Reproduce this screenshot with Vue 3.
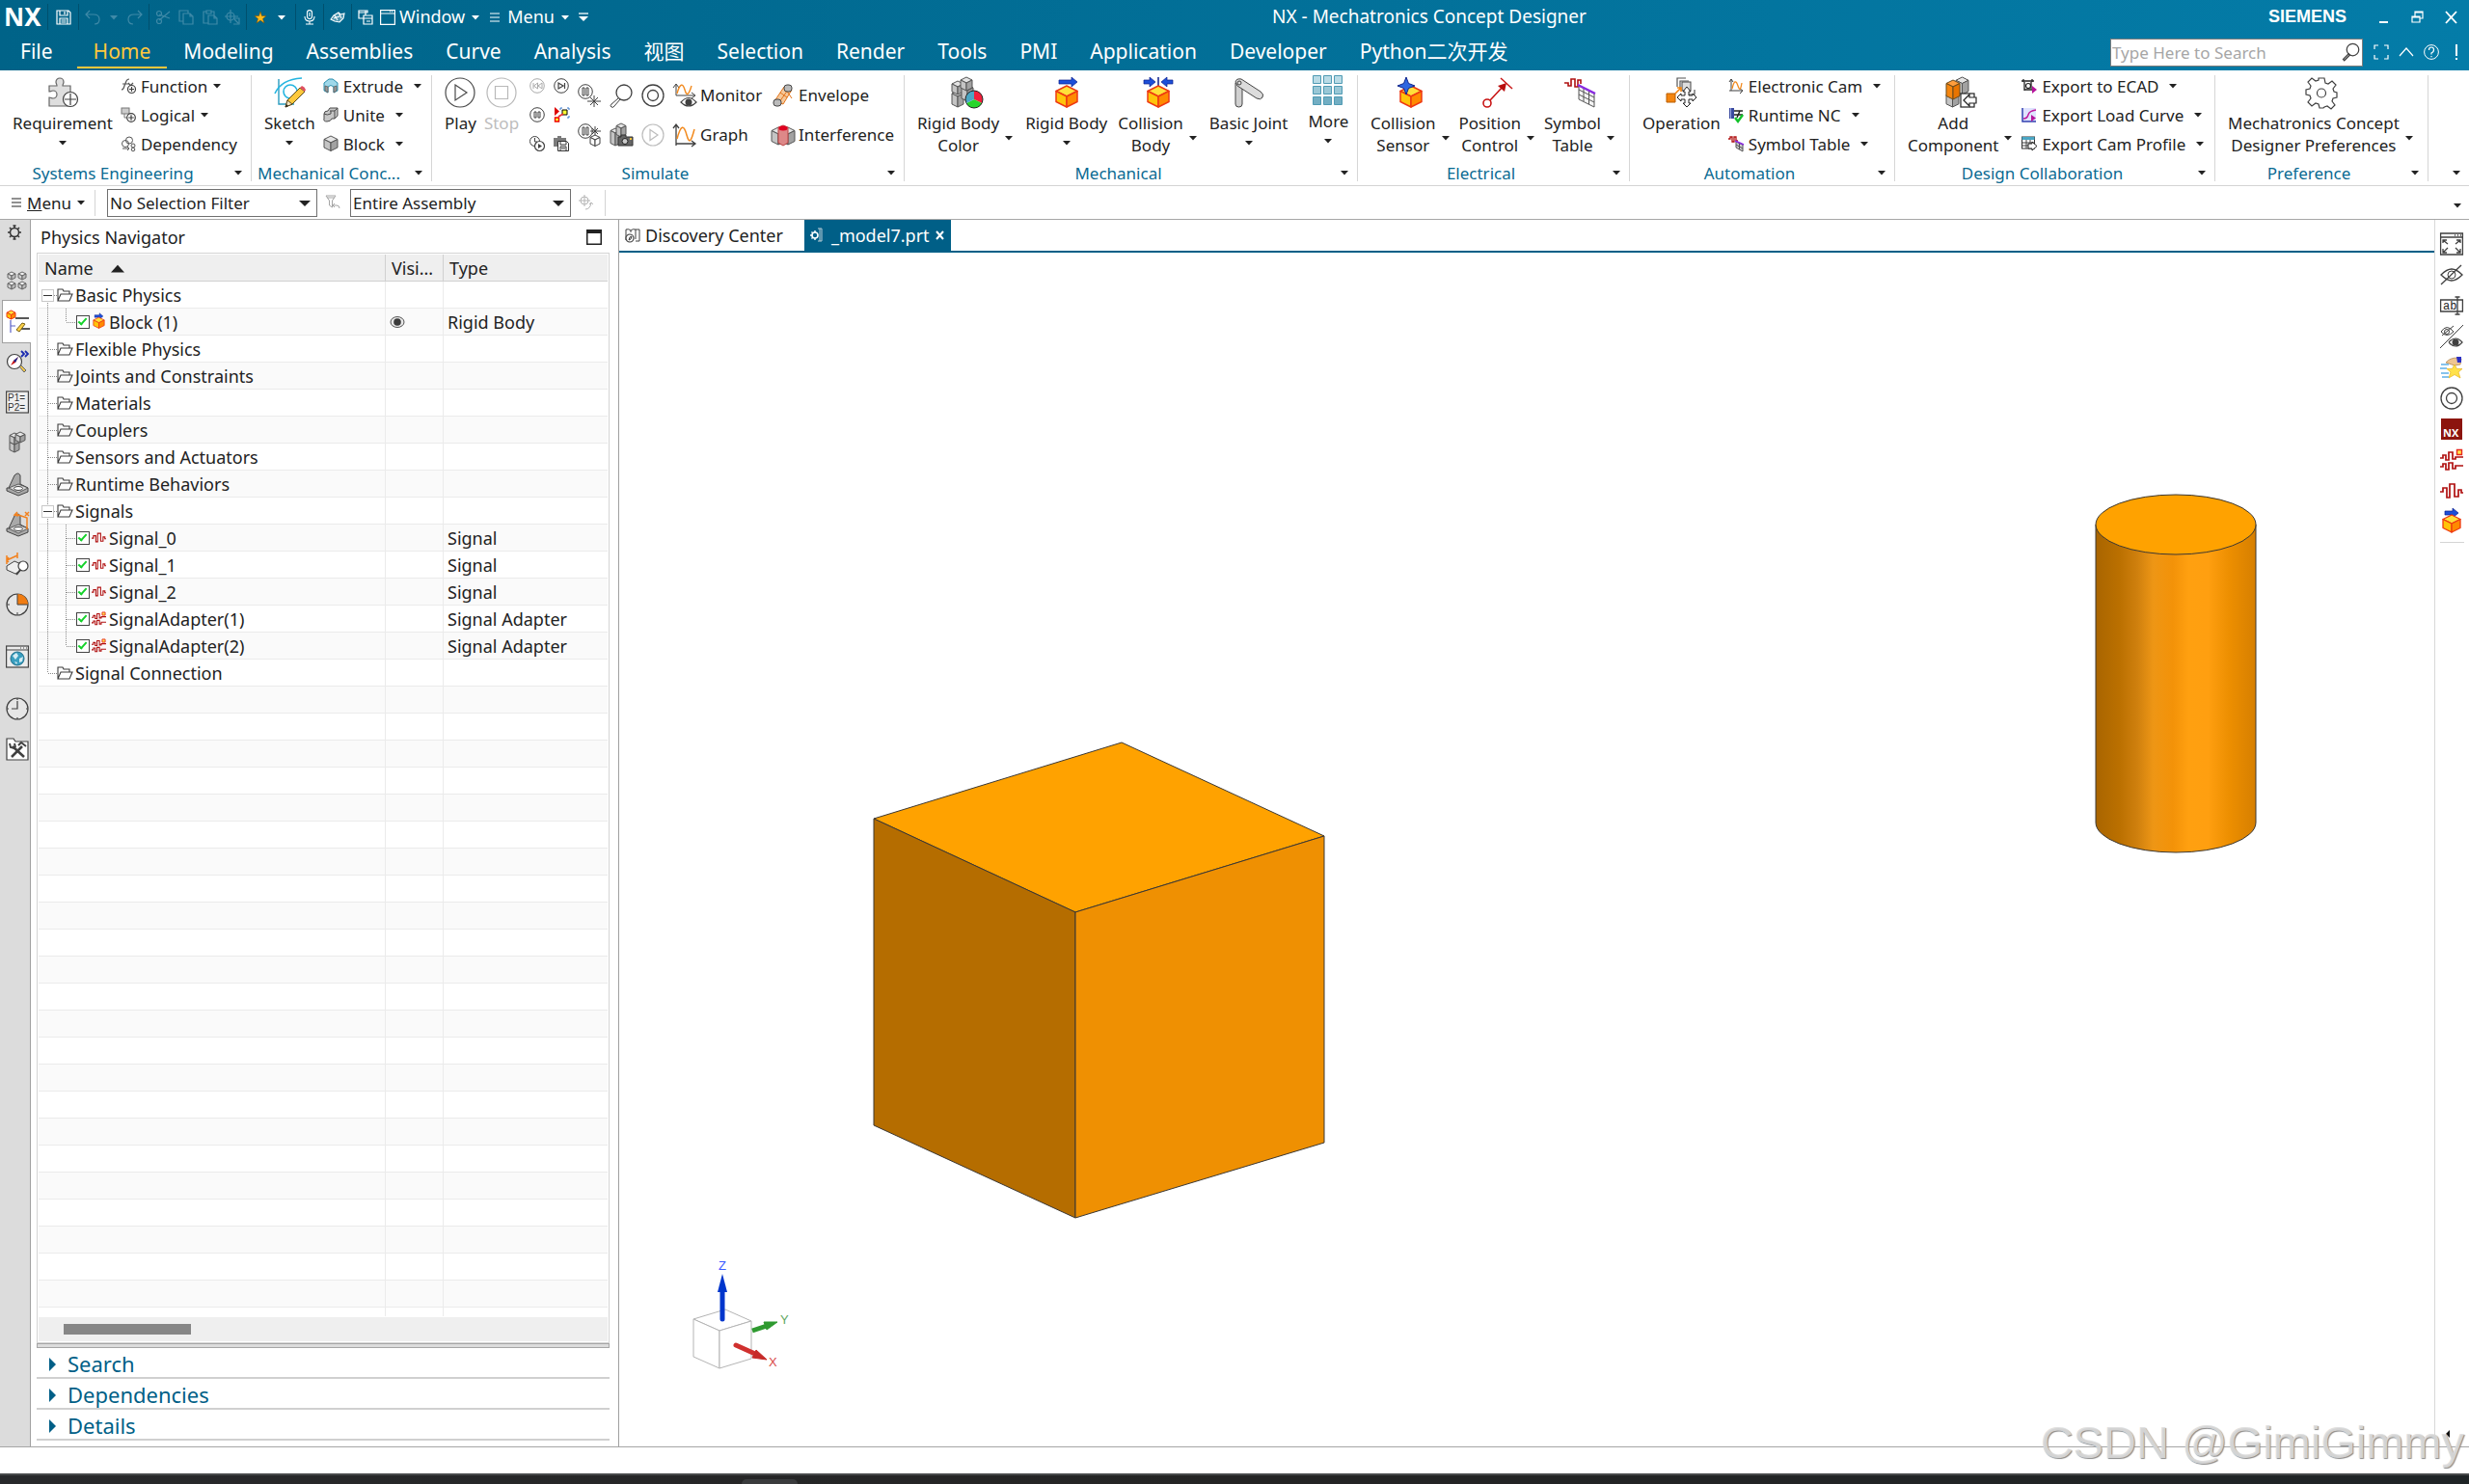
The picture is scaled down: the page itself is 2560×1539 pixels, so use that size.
<script setup>
import { h, ref } from 'vue'

const K = '#404040'
const grey = ['#e4e4e4', '#c4c4c4', '#a2a2a2', '#555']
const hot = ['#ffe03a', '#ffc40a', '#ff8a00', '#ee3a12']
const orange = ['#ff9d3c', '#f5860f', '#e87400', '#6b4a1a']

/* Isometric box: x, y is the top-left of its bounds, c = [top, left, right, edge] */
const box = (x, y, w, ht, c, sw = 1) => {
  const d = w / 4
  const m = x + w / 2
  return `<g stroke="${c[3]}" stroke-width="${sw}" stroke-linejoin="round"><path fill="${c[0]}" d="M${m} ${y}L${x + w} ${y + d}L${m} ${y + 2 * d}L${x} ${y + d}Z"/><path fill="${c[1]}" d="M${x} ${y + d}L${m} ${y + 2 * d}V${y + ht}L${x} ${y + ht - d}Z"/><path fill="${c[2]}" d="M${x + w} ${y + d}L${m} ${y + 2 * d}V${y + ht}L${x + w} ${y + ht - d}Z"/></g>`
}
const line = (d, c = K, w = 1, f = 'none') => `<path d="${d}" fill="${f}" stroke="${c}" stroke-width="${w}"/>`
const circ = (x, y, r, c = K, w = 1, f = 'none') => `<circle cx="${x}" cy="${y}" r="${r}" fill="${f}" stroke="${c}" stroke-width="${w}"/>`
const plus = (x, y, r) => circ(x, y, r, K, 1.2, '#fff') + line(`M${x - r + 1.5} ${y}H${x + r - 1.5}M${x} ${y - r + 1.5}V${y + r - 1.5}`, K, 1.2)
const eyeShape = (x, y, c = K) => line(`M${x - 11} ${y}Q${x - 5} ${y - 6} ${x} ${y - 6}T${x + 11} ${y}Q${x + 5} ${y + 6} ${x} ${y + 6}T${x - 11} ${y}Z`, c, 1.3)
const arrowR = (x, y, w) => `<path d="M${x} ${y - 2}h${w - 6}v-3l6 5l-6 5v-3h-${w - 6}z" fill="#1d4fd8" stroke="#0b1c8a" stroke-width=".7"/>`
const bracket = '<path d="M3 17L9 4q4-4 6 0v9l8 4v4l-10 4L1 20v-3z" fill="#a9a9a9" stroke="#444"/><path d="M3 17l10-4l10 4l-10 5z" fill="#d6d6d6" stroke="#444" stroke-width=".8"/><ellipse cx="13" cy="17.500" rx="4.500" ry="2" fill="#fff" stroke="#444"/>'

const icons = {
  caret: [8, '<path d="M0 2h8L4 6.500z" fill="currentColor"/>'],
  burger: [10, line('M0 1h10M0 5h10M0 9h10', 'currentColor')],
  overflow: [10, line('M0 1h10', 'currentColor', 1.3) + '<path d="M0 4h10L5 9z" fill="currentColor"/>'],
  save: [16, line('M1 1h12l2 2v12H1zM4 1v5h8V1M9 2v3M4 15V9h8v6M5.500 11h5M5.500 13h5', '#fff', 1.2)],
  undo: [16, line('M5 1L1 5l4 4M1 5h8q6 0 6 5t-5 5', '#3f8aa8', 1.2)],
  redo: [16, line('M11 1l4 4l-4 4M15 5H7q-6 0-6 5t5 5', '#3f8aa8', 1.2)],
  cut: [16, line('M4 5l11 4M4 11l11-9', '#3f8aa8', 1.2) + circ(4, 4, 2.5, '#3f8aa8', 1.2) + circ(4, 12, 2.5, '#3f8aa8', 1.2)],
  copy: [16, line('M10 4V1H1v11h4M5 4h7l3 3v8H5zM12 4v3h3', '#3f8aa8', 1.2)],
  paste: [16, line('M4 2H1v12h5M9 2h3v4M4 1h5v3H4zM6 6h6l3 3v6H6zM12 6v3h3', '#3f8aa8', 1.2)],
  move: [16, line('M6 0v14M0 7h14M9 9h6v6H9M10 10l4 4', '#3f8aa8', 1.2) + circ(6, 7, 4, '#3f8aa8', 1.2)],
  star: [16, '<path d="M8 2l1.500 4.500h4.500l-3.500 3l1.500 4.500L8 11l-4 3l1.500-4.500L2 6.500h4.500z" fill="#ffb91a" stroke="#7d4a00" stroke-width=".5"/>'],
  mic: [16, '<rect x="5.500" y=".6" width="5" height="9" rx="2.500" fill="none" stroke="#fff" stroke-width="1.100"/>' + line('M3 7q0 5 5 5t5-5M8 12v3M4 15h8M8 3v4', '#fff', 1.1)],
  hand: [16, line('M1 10l3-4l5-3l2 2l4-1l-1 5l-4 4l-5-1zM4 9l6-2M5 6l3 5M9 3l3 6', '#fff', 1.1, 'rgba(255,255,255,.3)')],
  windows: [16, line('M8 6V1H1v8h5M1 3h9V1H8M6 6h9v9H6zM6 9h9M9 12h4', '#fff', 1.2)],
  window: [16, line('M.6.6h14.800v14.800H.6zM1 4h14M10 2h1M12 2h1', '#fff', 1.2)],
  puzzle: [32, line('M2 9h8c0-2-1-2-1-4a4 4 0 0 1 8 0c0 2-1 2-1 4h8v21H2V21c2 0 2 1 4 1a4 4 0 0 0 0-8c-2 0-2 1-4 1z', '#666', 1.2, '#dedede') + plus(24, 23, 7.5)],
  func: [16, line('M1 12q2 0 3-4l2-5q1-2 3-2M2 6h6M8 5l5 6M13 5l-5 5', '#555', 1.2) + plus(11.5, 11.5, 4)],
  logical: [16, '<rect x="1" y="1" width="8" height="6" fill="#ccc" stroke="#777"/>' + line('M4 7v4h4', '#777') + plus(11, 11, 4.3)],
  depend: [16, circ(5, 8, 3.5, '#555') + circ(9, 4.5, 3.5, '#555') + line('M2 13h7M7 11l2 2l-2 2', '#555') + circ(13, 10, 2, '#555') + circ(13, 14, 1.8, '#555')],
  sketch: [32, line('M5 2v26h16', '#2a9cbf', 1.4) + line('M1 17C5 8 14 2 29 1', '#25b5e0', 1.6) + circ(17, 15, 7, '#25b5e0', 1.6) + '<path d="M12 31l2-7L27 11l5 4L19 28z" fill="#ffc83c" stroke="#5e4a1c"/><path d="M27 11l2-2q3 1 4 4l-1 2z" fill="#e05060"/><path d="M12 31l2-7l5 4z" fill="#f3e3c0" stroke="#5e4a1c"/><path d="M12 31l1-3l2 2z" fill="#222"/>'],
  extrude: [16, '<path d="M1 5l5-4h4l5 4v8l-4 2V9q-3-3-6 0v6l-4-2z" fill="#9fd8ea" stroke="#2b8fae"/><path d="M2 8v5l3 2V9zM14 8v5l-3 2V9z" fill="#9a9a9a" stroke="#555" stroke-width=".7"/>'],
  unite: [16, '<path d="M1 7q0-3 4-3l2-3h8v8l-3 3H9q-1 3-5 3t-3-3z" fill="#c6c6c6" stroke="#4b4b4b"/><path d="M7 4h5l3-3M12 4v8M1 7q3 2 7 0V4" fill="none" stroke="#4b4b4b"/>'],
  block: [16, box(1, 0, 14, 15.5, grey)],
  play: [32, circ(16, 16, 15, '#4a4a4a', 1.2) + line('M11 8l12 8l-12 8z', '#4a4a4a', 1.2)],
  stop: [32, circ(16, 16, 15, '#b9b9b9', 1.2) + line('M9.500 9.500h13v13h-13z', '#b9b9b9', 1.2)],
  playOff: [24, circ(12, 12, 11, '#bdbdbd', 1.2) + line('M9 6.500l8 5.500l-8 5.500z', '#bdbdbd', 1.2)],
  rewind: [16, circ(8, 8, 7.3, '#aaa') + line('M4 5v6M8.500 5v6l-4-3zM13 5v6l-4-3z', '#aaa')],
  forward: [16, circ(8, 8, 7.3) + line('M11.500 5v6M5 5v6l5-3z', K, 1.2)],
  pause: [16, circ(8, 8, 7.3) + line('M5 5h2v6H5zM9 5h2v6H9z')],
  flow: [16, '<path d="M1 0l5 4.500L1 9z" fill="#d00"/><path d="M9 3h5v5H9z" fill="#ff3" stroke="#000"/><path d="M1.500 11h4v4h-4z" fill="#ff3" stroke="#e00" stroke-width="1.400"/><path d="M5 10l5-3" stroke="#e33" stroke-width="2"/><path d="M7 3V1h2M14 1h2v2M16 9v2h-2" fill="none" stroke="#37c"/>'],
  timer: [16, circ(5.5, 5.5, 5) + line('M5.500 2v4H8') + circ(10.5, 10.5, 5, K, 1.2, '#fff') + '<path d="M9 8l4 2.500L9 13z" fill="#404040"/>'],
  snapshot: [16, '<path d="M0 2h4V0h4v2h5v9H0z" fill="#7b7b7b"/><path d="M4.500 5.500h9l2 2v8h-11z" fill="#fff" stroke="#333"/><path d="M7 6v3h6V6M7 15v-4h6v4M8 13h4" fill="none" stroke="#333"/>'],
  pauseHit: [24, circ(8, 8, 7.3) + line('M5 4h2v8H5zM9 4h2v8H9z') + line('M17 12v12M10 18h14M13 14l8 8M21 14l-8 8')],
  pauseBox: [24, circ(8, 8, 7.3) + line('M5 4h2v8H5zM9 4h2v8H9z') + line('M18 3v10M13 8h11M15 5l6 6M21 5l-6 6') + box(13, 12, 10, 11.5, ['#fff', '#fff', '#fff', K])],
  lens: [24, circ(15, 9, 8, K, 1.3) + line('M9 15l-7 6q-2 2 0 3t3-1l6-7')],
  target: [24, circ(12, 12, 11, K, 1.3) + circ(12, 12, 5.5, K, 1.3)],
  monitor: [24, line('M3 12V1M0 4l3-4l3 4M3 12h19M19 9l4 3l-4 3') + line('M4 10c3-11 6-11 8-4s4 6 7-4', '#f28a1e', 1.4) + line('M8 19q8-9 16 0q-8 8-16 0z', K, 1.2, '#fff') + '<circle cx="16" cy="19" r="3.500" fill="#404040"/>'],
  graph: [24, line('M3 23V1M0 5l3-4l3 4M3 21h20M19 18l4 3l-4 3', K, 1.3) + line('M4 16c4-15 7-15 10-4s5 5 8-6', '#f28a1e', 1.5)],
  camera: [24, box(1, 5, 10, 18, grey) + box(7, 0, 10, 14, grey) + '<path d="M9 14h3v-2h5v2h7v9H9z" fill="#666" stroke="#333"/><circle cx="16" cy="18.500" r="3" fill="#ccc" stroke="#222"/><path d="M21 15h2v2h-2z" fill="#ffc53a"/>'],
  envelope: [24, '<path d="M13 3l8 3l-9 15l-9-3z" fill="#f6c89a" stroke="#e3741a"/><path d="M17 6l-9 13M13 3l8 12M9 9l7 5" stroke="#e3741a" fill="none"/><rect x="13" y="1" width="8" height="7" rx="3" fill="#bbb" stroke="#444"/><rect x="2" y="16" width="8" height="7" rx="3" fill="#bbb" stroke="#444"/>'],
  interfere: [24, box(0, 4, 14, 18, grey) + box(10, 4, 14, 18, grey) + '<path d="M7 4l5-2l5 2v16l-5 3l-5-3z" fill="#d88" stroke="#b44"/><ellipse cx="12" cy="5" rx="4.500" ry="2.500" fill="#e00020"/>'],
  color: [32, box(1, 14, 12, 17, grey) + box(1, 4, 12, 14, grey) + box(11, 8, 12, 17, grey) + box(10, 0, 12, 14, grey) + '<path d="M24 23V14a9 9 0 0 1 8 13z" fill="#f1203c"/><path d="M24 23l8 4a9 9 0 0 1-16 0z" fill="#27d52b"/><path d="M24 23l-8 4a9 9 0 0 1 8-13z" fill="#4aa6c4"/><circle cx="24" cy="23" r="9" fill="none" stroke="#222"/>'],
  rigid: [32, arrowR(8, 5, 19) + box(5, 9, 22, 22, hot, 1.5)],
  collide: [32, arrowR(1, 5, 12) + '<path d="M31 3h-6V0l-6 5l6 5V7h6z" fill="#1d4fd8" stroke="#0b1c8a" stroke-width=".7"/><path d="M16 0v10" stroke="#0b1c8a" stroke-width="1.500"/>' + box(5, 9, 22, 22, hot, 1.5)],
  joint: [32, '<path d="M2 6v22q0 3 3.500 3T9 28V9z" fill="#d0d0d0" stroke="#444"/><path d="M2 5q1-4 6-3l20 13q4 3 2 6t-6 1L4 9z" fill="#dcdcdc" stroke="#444"/>' + circ(6, 6, 2)],
  more: [32, '<g stroke="#4f9ab3"><g fill="#b9dbe6"><path d="M.5.5h8v8h-8zM11.500.5h8v8h-8zM22.500.5h8v8h-8z"/></g><g fill="#99c7d6"><path d="M.5 11.500h8v8h-8zM11.500 11.500h8v8h-8zM22.500 11.500h8v8h-8z"/></g><g fill="#72aec3"><path d="M.5 22.500h8v8h-8zM11.500 22.500h8v8h-8zM22.500 22.500h8v8h-8z"/></g></g>'],
  sensor: [32, box(5, 9, 22, 22, hot, 1.5) + '<path d="M11 0l2.500 6.500L20 9l-6.500 2.500L11 18l-2.500-6.500L2 9l6.500-2.500z" fill="#2e66e0" stroke="#10258c"/>'],
  position: [32, circ(5, 27, 4, '#c81414', 1.6) + line('M8 24L22 9', '#c81414', 1.6) + '<path d="M25 6l-2 9l-7-6z" fill="#b80e0e"/>' + line('M19 1l12 11', '#c81414', 1.4)],
  symbols: [32, line('M0 6h4v3h3V2h4v8h3V3h3v4', '#b01010', 1.6) + '<path d="M15 9l16 8v14l-16-8z" fill="#f4f4f4" stroke="#555"/>' + line('M15 13l16 8M15 18l16 8M20 11v14M25.500 14v14', '#555') + line('M14 8l18 9', '#8a2be2', 2.4)],
  operation: [32, line('M12 10V1h9M15 13V4h9M30 13v5h-6', '#555', 1.2) + '<rect x="17" y="5" width="9" height="9" fill="#ddd" stroke="#444"/><path d="M1 17h9v9H1z" fill="#f5860f" stroke="#b85c00"/>' + line('M10 17l5-5M12 11h4v4', '#f5860f', 1.6) + '<path d="M22 11l4 5h-2v4h4v-2l4 4l-4 4v-2h-4v4h2l-4 4l-4-4h2v-4h-4v2l-4-4l4-4v2h4v-4h-2z" fill="#fff" stroke="#222" transform="translate(0 -1)"/>'],
  cam: [16, line('M3 13V1M1 4l2-3l2 3M1 13h13M12 11l3 2l-3 3') + line('M4 11c2-9 4-9 6-3s3 3 4-3', '#f28a1e', 1.3)],
  runtime: [16, '<path d="M1 1h5v11H1z" fill="#3a4aa0"/><path d="M2 1h1v11H2z" fill="#9aa6e0"/>' + line('M6 4h9M6 8h9M12 4l-3 7', '#222', 1.5) + line('M7 11l3 4l5-7', '#12c22a', 2.5)],
  symtab: [16, line('M0 3h2V1h2v5h2V1h2v4h2', '#b01010', 1.3) + '<path d="M8 6l7 3v7l-7-4z" fill="#ccc" stroke="#555"/>' + line('M8 9l7 4M11.500 8v6', '#555') + line('M7 5l9 4', '#8a2be2', 1.5)],
  add: [32, box(11, 0, 13, 18, grey) + box(1, 15, 13, 16, grey) + box(1, 3, 14, 20, orange) + '<rect x="16" y="17" width="14" height="14" fill="#fff" stroke="#222" stroke-width="1.200"/><path d="M19 24l6-6v3h7v6h-7v3z" fill="#fff" stroke="#222" stroke-width="1.200"/>'],
  ecad: [16, line('M0 3h13M2 1v3M11 1v3M3 4v9M3 12h8M10 4v7', '#222', 1.3) + circ(7, 8, 2.5, '#222', 1.2) + '<path d="M11 8l5 4l-5 4z" fill="#b6149c"/>'],
  load: [16, '<rect x="1" y="1" width="14" height="14" fill="#dfe3ff"/>' + line('M1 1v14h14', '#3340b0', 1.5) + line('M2 12q4 0 5-4t8-5', '#c0189c', 1.4) + '<path d="M10 8l5 3.500l-5 3.500z" fill="#b6149c"/>'],
  profile: [16, '<rect x=".5" y="1" width="13" height="12" fill="#fff" stroke="#333"/><rect x=".5" y="1" width="13" height="3" fill="#4aa6c4"/>' + line('M1 7h12M1 10h12M5 4v9M9 4v9') + '<path d="M7 8h4V6l5 4.500L11 15v-2H7z" fill="#fff" stroke="#222"/>'],
  gear: [32, line('M13 1h6l1 5l3 1l4-3l4 4l-3 4l1 3l3 1v0l0 1v4l-4 1l-1 3l3 4l-4 4l-4-3l-3 1l-1 1h-4l-1-4l-3-1l-4 3l-4-4l3-4l-1-3l-4-1v-5l4-1l1-3l-3-4l4-4l4 3l3-1z', K, 1.2) + circ(16, 16.5, 4.5, K, 1.2)],
  filterBack: [16, line('M1 1h10L7.500 6v7l-3-2V6zM2 3h8M10 9l-2 2l2 2M8 11h4q3 0 3 3', '#a5a5a5')],
  snap: [16, line('M6 0v12M0 6h12M7 15q5 0 6-7M11 10l2-2l2 2', '#b5b5b5') + circ(6, 6, 4, '#b5b5b5')],
  cog: [16, line('M6.500 1h3M8 1v2M8 13v2M6.500 15h3M1 8h2M13 8h2M3 3l2 2M13 3l-2 2M3 13l2-2M13 13l-2-2', '#333', 1.5) + circ(8, 8, 4.5, '#333', 1.5)],
  cubes: [24, [[2, 3], [13, 3], [2, 13], [13, 13]].map(([x, y]) => box(x, y, 8, 8, ['#eee', '#d0d0d0', '#bbb', '#666'], 1)).join('')],
  tree: [24, box(0, 0, 9, 9, hot) + line('M9 8h14M15 19h9', '#222', 1.3) + line('M4 10v13M4 16h5', '#5a62c8', 1.2) + '<path d="M10 20l6-7l3 1l-6 8z" fill="#ffd24a" stroke="#7a6210"/>'],
  find: [24, circ(9, 12, 7.5, K, 1.2, '#fff') + '<path d="M5 16l3-5l5-4l-3 6z" fill="#c81414"/><path d="M8 11l5-4l-3 6z" fill="#1a2a90"/><path d="M14 17l2-1l5 5l-2 2z" fill="#f2c84a" stroke="#666"/>' + line('M16 1l3 3l-3 3M20 1l3 3l-3 3', '#1a2ab0', 1.8)],
  params: [24, '<rect x=".6" y="1" width="22.800" height="22" fill="#efefef" stroke="#444" stroke-width="1.200"/><text x="2" y="11" font-size="10" font-family="Liberation Sans, sans-serif" fill="#333">P1=</text><text x="2" y="21" font-size="10" font-family="Liberation Sans, sans-serif" fill="#333">P2=</text>'],
  parts: [24, box(4, 9, 10, 13, grey) + box(4, 2, 10, 12, grey) + box(10, 1, 10, 11, grey)],
  bracket: [24, bracket],
  bracketDim: [24, bracket + line('M10 2l12 4v12M12 0l-3 3l4 1M20 0l4 4M24 0l-4 4', '#f2811e', 1.5)],
  measure: [24, '<path d="M1 14l8-5l9 4v4l-8 5l-9-4z" fill="#eee" stroke="#444"/>' + line('M1 8l11-5M1 3v9M12 0v6M3 10l-2-2l2-3', '#f2811e', 1.5) + circ(18, 14, 5, K, 1.2, '#fff') + line('M15 18l-4 5', K, 2)],
  pie: [24, circ(12, 12, 11, K, 1.2, '#e6e6e6') + '<path d="M12 12V1a11 11 0 0 1 11 11z" fill="#f07c12"/>' + line('M1 12h3M12 23v-3M12 1v11h11')],
  web: [24, '<rect x=".6" y="1" width="22.800" height="22" fill="#ececec" stroke="#444" stroke-width="1.200"/>' + line('M1 5h22M15 3h1M18 3h1M21 3h1') + circ(12, 14, 7, '#1d6d8a', 1, '#3a9fc0') + '<path d="M7 11l4-3l2 3l-3 4zM14 14l4-2l-1 5l-3 1zM9 17l3 1l-1 2z" fill="#d6ecf3"/>'],
  clock: [24, circ(12, 12, 11, K, 1.2, '#e6e6e6') + line('M12 4v8H6M12 1v2M12 21v2M21 12h2M1 12h2', K, 1.2)],
  toolbox: [24, line('M1 4V1h7l2 3h13v19H1z', K, 1.2, '#fff') + line('M7 9l12 11M17 9L6 20', K, 2.6) + line('M4 6l1 4l4 1M9 6l1 4M13 8l3-3l5 4', K, 2)],
  fit: [24, line('M.6 1h22.800v22H.6zM1 5h22M15 3h1M18 3h1M21 3h1M3 11V8h4M3 8l5 4M17 8h4v3M21 8l-5 4M3 17v4h4M3 21l5-5M17 21h4v-4M21 21l-5-5', K, 1.3)],
  eyeOff: [24, eyeShape(12, 12) + circ(12, 12, 4) + line('M1 22L22 2', K, 1.3)],
  rename: [24, line('M.6 6h22.800v12H.6zM18 3v18M15.500 3h5M15.500 21h5', K, 1.3) + '<text x="3" y="16" font-size="12" font-family="Liberation Mono, monospace" fill="#222">ab</text>'],
  swap: [24, line('M1 7q6-9 13 0q-7 7-13 0M2 11L14 1M0 24L24 0') + circ(7, 7, 2.5) + line('M9 18q7-8 14 0q-7 8-14 0', K, 1.2, '#fff') + '<circle cx="16" cy="18" r="3.500" fill="#404040"/>'],
  favorite: [24, '<path d="M6 7q4-5 12-5l4 1l-1 6l-6 1z" fill="#eec592" stroke="#a77a42" stroke-width=".7"/><path d="M17 1h5v6h-4z" fill="#2b2fc4"/><path d="M15 9l2.500 4.500H23l-4 3.500l2 6l-6-3.500L9 23l2-6l-4-3.500h5.500z" fill="#ffe14a" stroke="#e8b520" stroke-width=".7"/>' + line('M1 9h8M0 13h7M1 18h8M2 22h7', '#5fb0e6', 1.5)],
  nx: [24, '<rect x="1" y="1" width="22" height="22" fill="#8c140e"/><text x="3" y="20" font-size="11" font-weight="700" font-family="Open Sans, sans-serif" fill="#fff">NX</text>'],
  adapter: [24, line('M0 10h3v-3h3v5h3V4h4v7h3V9h8M0 19h3v-3h3v6h3v-7h4v6h3v-3h8', '#b01010', 1.7) + '<path d="M17.500 1.500h5v5h-5z" fill="#ffe84a" stroke="#e8281e" stroke-width="1.400"/>'],
  signal: [24, line('M0 13h3v-4h4v10h3v-14h5v13h4v-7h3v3h2', '#b01010', 1.7)],
  rigidSm: [24, arrowR(5, 3, 14) + box(3, 5, 18, 18, hot, 1.3)],
  folder: [16, line('M1 14V2h5l1 2h6v3M1 14L4 7h12l-3 7z', '#3c3c3c', 1.1)],
  eye: [16, '<ellipse cx="8" cy="8" rx="7" ry="5.500" fill="#e8e8e8" stroke="#555"/><circle cx="8" cy="8" r="3.800" fill="#3a3a3a"/>'],
  maximize: [16, '<path d="M0 0h16v16H0zM1.500 4v10.500h13V4z" fill="#222" fill-rule="evenodd"/>'],
  book: [16, line('M1 13V2q3-1 5 1q2-2 5-1l4 0v12h-4M6 3v2M11 2v10') + circ(5, 11, 4, K, 1.2, '#fff') + line('M4 13l1-3l2-1l-1 3z')],
  part: [16, line('M8 1h4v13H8M10 1v13', '#b9cdd6') + circ(5, 8, 3, '#fff', 1.6) + line('M5 3v2M5 11v2M0 8h2M1.500 4.500l1.500 1.500M1.500 11.500L3 10', '#fff', 1.4)],
  close: [10, line('M1 1l7 8M8 1L1 9', 'currentColor', 2)],
  expand: [16, line('M1 5V1h4M11 1h4v4M15 11v4h-4M5 15H1v-4', '#fff', 1.2)],
  up: [16, line('M1 12l7-8l7 8', '#fff', 1.2)],
  help: [16, circ(8, 8, 7.4, '#fff') + line('M5.500 6q0-3 2.500-3t2.500 2.500T8 9v1.500M8 12v1.200', '#fff', 1.2)],
  bang: [16, line('M8 0v12M8 14v2', '#fff', 2)],
  min: [16, line('M3 13h9', '#fff', 2)],
  restore: [16, line('M2 7h8v6H2zM2 8h8M5 7V2h8v7h-3M5 3h8', '#fff', 1.2)],
  exit: [16, line('M2 2l11 12M13 2L2 14', '#fff', 1.8)],
  searchSm: [16, circ(10, 6, 5, K) + line('M7 9l-5 5l1 1l5-5', K)]
}

const Icon = (props) => {
  const [vb, body] = icons[props.n]
  const s = props.s || vb
  return h('svg', { width: s, height: s, viewBox: `0 0 ${vb} ${vb}`, 'aria-hidden': 'true', innerHTML: body })
}
Icon.props = ['n', 's']

const tabs = ['File', 'Home', 'Modeling', 'Assemblies', 'Curve', 'Analysis', '视图', 'Selection', 'Render', 'Tools', 'PMI', 'Application', 'Developer', 'Python二次开发']
const activeTab = ref('Home')

const quick = [
  { i: 'save', wide: 1 }, { sep: 1 }, { i: 'undo' }, { i: 'caret', dim: 1 }, { i: 'redo' }, { sep: 1 },
  { i: 'cut' }, { i: 'copy', wide: 1 }, { i: 'paste', wide: 1 }, { i: 'move' }, { sep: 1 },
  { i: 'star' }, { i: 'caret' }, { sep: 1 }, { i: 'mic' }, { sep: 1 }, { i: 'hand' }, { sep: 1 }, { i: 'windows' }
]

const groups = [
  { name: 'Systems Engineering', big: [{ i: 'puzzle', t: ['Requirement'], c: 1 }],
    small: [{ i: 'func', t: 'Function', c: 1 }, { i: 'logical', t: 'Logical', c: 1 }, { i: 'depend', t: 'Dependency' }] },
  { name: 'Mechanical Conc...', big: [{ i: 'sketch', t: ['Sketch'], c: 1 }],
    small: [{ i: 'extrude', t: 'Extrude', c: 1 }, { i: 'unite', t: 'Unite', c: 1 }, { i: 'block', t: 'Block', c: 1 }], loose: 1 },
  { name: 'Simulate', big: [{ i: 'play', t: ['Play'] }, { i: 'stop', t: ['Stop'], off: 1 }], sim: 1 },
  { name: 'Mechanical', roomy: 1, big: [
    { i: 'color', t: ['Rigid Body', 'Color'], c: 1 }, { i: 'rigid', t: ['Rigid Body'], c: 1 },
    { i: 'collide', t: ['Collision', 'Body'], c: 1 }, { i: 'joint', t: ['Basic Joint'], c: 1 }, { i: 'more', t: ['More'], c: 1, gallery: 1 }] },
  { name: 'Electrical', big: [
    { i: 'sensor', t: ['Collision', 'Sensor'], c: 1 }, { i: 'position', t: ['Position', 'Control'], c: 1 }, { i: 'symbols', t: ['Symbol', 'Table'], c: 1 }] },
  { name: 'Automation', big: [{ i: 'operation', t: ['Operation'] }],
    small: [{ i: 'cam', t: 'Electronic Cam', c: 1 }, { i: 'runtime', t: 'Runtime NC', c: 1 }, { i: 'symtab', t: 'Symbol Table', c: 1 }], loose: 1 },
  { name: 'Design Collaboration', big: [{ i: 'add', t: ['Add', 'Component'], c: 1 }],
    small: [{ i: 'ecad', t: 'Export to ECAD', c: 1 }, { i: 'load', t: 'Export Load Curve', c: 1 }, { i: 'profile', t: 'Export Cam Profile', c: 1 }], loose: 1 },
  { name: 'Preference', big: [{ i: 'gear', t: ['Mechatronics Concept', 'Designer Preferences'], c: 1 }] }
]
const simSmall = ['rewind', 'forward', 'pause', 'flow', 'timer', 'snapshot']
const simMid = ['pauseHit', 'lens', 'target', 'pauseBox', 'camera', 'playOff']
const simText = [['monitor', 'Monitor'], ['envelope', 'Envelope'], ['graph', 'Graph'], ['interfere', 'Interference']]

const rows = [
  { t: 'Basic Physics', open: 1, first: 1 },
  { t: 'Block (1)', kid: 1, last: 1, i: 'rigidSm', eye: 1, type: 'Rigid Body' },
  { t: 'Flexible Physics' }, { t: 'Joints and Constraints' }, { t: 'Materials' }, { t: 'Couplers' },
  { t: 'Sensors and Actuators' }, { t: 'Runtime Behaviors' }, { t: 'Signals', open: 1 },
  { t: 'Signal_0', kid: 1, i: 'signal', type: 'Signal' }, { t: 'Signal_1', kid: 1, i: 'signal', type: 'Signal' },
  { t: 'Signal_2', kid: 1, i: 'signal', type: 'Signal' }, { t: 'SignalAdapter(1)', kid: 1, i: 'adapter', type: 'Signal Adapter' },
  { t: 'SignalAdapter(2)', kid: 1, last: 1, i: 'adapter', type: 'Signal Adapter' }, { t: 'Signal Connection', end: 1 }
]
const guide = (r) => {
  if (r.kid) return `M9.500 0V28M28.500 0V${r.last ? 14 : 28}M29 14.500H38`
  return `M9.500 ${r.first ? 14 : 0}V${r.end ? 14 : 28}M10 14.500H19`
}
const checked = ref(rows.map((r) => !!r.kid))

const side = ['cubes', 'tree', 'find', 'params', 'parts', 'bracket', 'bracketDim', 'measure', 'pie', 'web', 'clock', 'toolbox']
const strip = ['fit', 'eyeOff', 'rename', 'swap', 'favorite', 'target', 'nx', 'adapter', 'signal', 'rigidSm']
</script>

<template>
  <div class="app">
    <header class="head">
      <div class="title-row">
        <strong class="logo">NX</strong>
        <i class="vline"></i>
        <template v-for="(q, k) in quick" :key="k">
          <i v-if="q.sep" class="vline"></i>
          <button v-else type="button" class="qbtn" :class="{ dim: q.dim, wide: q.wide }"><Icon :n="q.i" /></button>
        </template>
        <button type="button" class="qtext"><Icon n="window" />Window<Icon n="caret" class="qc" /></button>
        <button type="button" class="qtext"><Icon n="burger" class="qb" />Menu<Icon n="caret" class="qc" /></button>
        <button type="button" class="qbtn over"><Icon n="overflow" /></button>
        <h1>NX - Mechatronics Concept Designer</h1>
        <strong class="siemens">SIEMENS</strong>
        <button type="button" class="win"><Icon n="min" /></button>
        <button type="button" class="win"><Icon n="restore" /></button>
        <button type="button" class="win"><Icon n="exit" /></button>
      </div>
      <nav class="tab-row">
        <button v-for="t in tabs" :key="t" type="button" class="tab" :class="{ on: t === activeTab }" @click="activeTab = t">{{ t }}</button>
        <label class="search"><input type="text" placeholder="Type Here to Search" aria-label="Type Here to Search" /><Icon n="searchSm" s="20" /></label>
        <button v-for="n in ['expand', 'up', 'help', 'bang']" :key="n" type="button" class="aid"><Icon :n="n" /></button>
      </nav>
    </header>

    <section class="ribbon">
      <div v-for="g in groups" :key="g.name" class="group">
        <div class="tools" :class="{ roomy: g.roomy }">
          <button v-for="b in g.big" :key="b.t[0] + b.i" type="button" class="big" :class="{ off: b.off, gallery: b.gallery }">
            <Icon :n="b.i" />
            <span class="cap">
              <span class="lines"><span v-for="l in b.t" :key="l">{{ l }}</span></span>
              <Icon v-if="b.c" n="caret" :class="b.t.length > 1 ? 'beside' : 'under'" />
            </span>
          </button>
          <div v-if="g.small" class="smalls" :class="{ loose: g.loose }">
            <button v-for="s in g.small" :key="s.t" type="button" class="small"><Icon :n="s.i" /><span>{{ s.t }}</span><Icon v-if="s.c" n="caret" class="sc" /></button>
          </div>
          <template v-if="g.sim">
            <div class="sim-small"><button v-for="n in simSmall" :key="n" type="button"><Icon :n="n" /></button></div>
            <div class="sim-mid"><button v-for="n in simMid" :key="n" type="button"><Icon :n="n" /></button></div>
            <div class="sim-text"><button v-for="[n, t] in simText" :key="n" type="button"><Icon :n="n" />{{ t }}</button></div>
          </template>
        </div>
        <div class="group-name"><span>{{ g.name }}</span><button type="button"><Icon n="caret" /></button></div>
      </div>
      <div class="group rest"><div class="group-name"><button type="button"><Icon n="caret" /></button></div></div>
    </section>

    <section class="selbar">
      <button type="button" class="menu"><Icon n="burger" /><span><u>M</u>enu</span><Icon n="caret" /></button>
      <i class="bar"></i>
      <span class="pick first"><select aria-label="Selection filter"><option>No Selection Filter</option></select></span>
      <Icon n="filterBack" />
      <span class="pick second"><select aria-label="Selection scope"><option>Entire Assembly</option></select></span>
      <Icon n="snap" />
      <i class="bar"></i>
      <button type="button" class="more-sel"><Icon n="caret" /></button>
    </section>

    <main class="main">
      <aside class="side">
        <button type="button" class="cog"><Icon n="cog" /></button>
        <button v-for="n in side" :key="n" type="button" :class="['res', n, { on: n === 'tree' }]"><Icon :n="n" /></button>
      </aside>

      <section class="nav">
        <div class="nav-title"><h2>Physics Navigator</h2><button type="button"><Icon n="maximize" /></button></div>
        <div class="grid">
          <div class="grid-body">
            <table>
              <colgroup><col class="c1" /><col class="c2" /><col /></colgroup>
              <thead>
                <tr><th>Name <Icon n="caret" s="14" class="sort" /></th><th>Visi...</th><th>Type</th></tr>
              </thead>
              <tbody>
                <tr v-for="(r, k) in rows" :key="r.t">
                  <td>
                    <div class="node">
                      <svg class="guide" :width="r.kid ? 38 : 19" height="28"><path :d="guide(r)" /></svg>
                      <button v-if="r.open" type="button" class="minus" :aria-label="'Collapse ' + r.t"></button>
                      <label v-if="r.kid" class="kid"><input v-model="checked[k]" type="checkbox" /><Icon :n="r.i" s="15" />{{ r.t }}</label>
                      <span v-else class="dir"><Icon n="folder" />{{ r.t }}</span>
                    </div>
                  </td>
                  <td><Icon v-if="r.eye" n="eye" /></td>
                  <td>{{ r.type }}</td>
                </tr>
                <tr v-for="n in 24" :key="n"><td></td><td></td><td></td></tr>
              </tbody>
            </table>
          </div>
          <div class="hscroll"><div class="thumb"></div></div>
        </div>
        <div class="split"></div>
        <button v-for="s in ['Search', 'Dependencies', 'Details']" :key="s" type="button" class="fold">{{ s }}</button>
      </section>

      <section class="stage">
        <div class="files">
          <button type="button" class="file"><Icon n="book" />Discovery Center</button>
          <button type="button" class="file cur"><Icon n="part" />_model7.prt<Icon n="close" /></button>
        </div>
        <svg class="scene" viewBox="642 262 1882 1238">
          <defs>
            <linearGradient id="barrel">
              <stop offset="0" stop-color="#a96500" /><stop offset=".15" stop-color="#bb7000" /><stop offset=".26" stop-color="#cf800e" />
              <stop offset=".36" stop-color="#ee9615" /><stop offset=".48" stop-color="#f39208" /><stop offset=".58" stop-color="#ffa010" />
              <stop offset=".7" stop-color="#ff9f10" /><stop offset=".84" stop-color="#ec8e00" /><stop offset="1" stop-color="#d67f00" />
            </linearGradient>
          </defs>
          <g stroke="#3c3833" stroke-linejoin="round">
            <path fill="#ffa200" d="M1163 770L1373 867L1115 946L906 849Z" />
            <path fill="#b56d00" d="M906 849L1115 946V1263L906 1167Z" />
            <path fill="#ef9002" d="M1373 867L1115 946V1263L1373 1185Z" />
            <path fill="url(#barrel)" d="M2173 544V853A83 31 0 0 0 2339 853V544Z" />
            <ellipse fill="#ffa200" cx="2256" cy="544" rx="83" ry="31" />
          </g>
          <g fill="#fff" stroke="#b4b4b4">
            <path d="M719 1368L752 1358L779 1370L746 1380Z" />
            <path d="M719 1368L746 1380V1419L719 1407Z" />
            <path d="M779 1370L746 1380V1419L779 1409Z" />
          </g>
          <path d="M749 1368V1338" stroke="#0036cc" stroke-width="5" stroke-linecap="round" />
          <path d="M749 1321L754 1340H744Z" fill="#0036cc" />
          <path d="M780 1380L795 1375" stroke="#2f9a30" stroke-width="5" />
          <path d="M806 1371L792 1371L795 1379Z" fill="#2f9a30" stroke="#2f9a30" />
          <path d="M763 1395L783 1404" stroke="#d0302e" stroke-width="5" stroke-linecap="round" />
          <path d="M795 1410L784 1400L780 1408Z" fill="#c62a28" stroke="#c62a28" />
          <g class="axis"><text x="745" y="1317" fill="#3b5bff">Z</text><text x="809" y="1373" fill="#5fa863">Y</text><text x="797" y="1417" fill="#d94a4a">X</text></g>
        </svg>
      </section>

      <aside class="strip">
        <button v-for="n in strip" :key="n" type="button"><Icon :n="n" /></button>
        <i></i>
        <span class="tick"></span>
      </aside>
    </main>

    <footer class="status"></footer>
    <div class="dock"><span></span></div>
    <div class="mark">CSDN @GimiGimmy</div>
  </div>
</template>

<style>
body {
  margin: 0;
}
</style>

<style scoped>
.app {
  position: relative;
  display: flex;
  flex-direction: column;
  height: 100vh;
  overflow: hidden;
  background: #fff;
  color: #222;
  font: 17px/23px 'Noto Sans', 'Noto Sans CJK SC', sans-serif;
}
svg {
  display: block;
  flex: none;
  overflow: visible;
}
button {
  display: flex;
  align-items: center;
  padding: 0;
  border: 0;
  background: none;
  color: inherit;
  font: inherit;
  white-space: nowrap;
}
h1, h2 {
  margin: 0;
  font: inherit;
}

.head {
  background: linear-gradient(90deg, #006388, #047ca8);
  color: #fff;
}
.title-row {
  display: flex;
  align-items: center;
  height: 35px;
}
.logo {
  width: 45px;
  padding-left: 4px;
  font: 700 26px/35px 'Noto Sans', sans-serif;
}
.vline {
  width: 1px;
  height: 27px;
  background: #00506e;
}
.qbtn {
  justify-content: center;
  width: 22px;
  height: 30px;
}
.vline + .qbtn {
  margin-left: 3px;
}
.qbtn:has(+ .vline) {
  margin-right: 3px;
}
.qbtn.dim {
  color: #3f8aa8;
}
.qbtn.wide {
  width: 25px;
}
.qtext {
  gap: 4px;
  margin-left: 4px;
  font-size: 18px;
}
.qc {
  margin-left: 3px;
}
.qb {
  margin: 0 4px 0 7px;
}
.over {
  margin-left: 4px;
}
h1 {
  flex: 1;
  padding-right: 4px;
  text-align: center;
  font-size: 19px;
}
.siemens {
  margin-right: 22px;
  font: 700 18px/35px 'Liberation Sans', sans-serif;
}
.win {
  width: 35px;
  padding-left: 9px;
  box-sizing: border-box;
}
.tab-row {
  display: flex;
  align-items: center;
  height: 38px;
}
.tab {
  height: 36px;
  box-sizing: border-box;
  margin-bottom: 2px;
  padding: 2px 17px 0;
  border-bottom: 2px solid transparent;
  font-size: 21px;
}
.tab:first-child {
  padding: 2px 25px 0 21px;
}
.tab.on {
  border-color: #ffc83c;
  color: #ffc83c;
}
.search {
  display: flex;
  align-items: center;
  box-sizing: border-box;
  width: 262px;
  height: 29px;
  margin-left: auto;
  margin-right: 6px;
  padding-right: 2px;
  border: 1px solid #7c7c7c;
  background: #fff;
}
.search input {
  flex: 1;
  min-width: 0;
  padding: 0 1px;
  border: 0;
  outline: 0;
  font: inherit;
}
.search input::placeholder {
  color: #a6a6a6;
}
.aid {
  justify-content: center;
  width: 26px;
}

.ribbon {
  display: grid;
  grid-template-columns: 261px 187px 490px 470px 282px 275px 332px 221px 1fr;
  height: 119px;
  border-bottom: 1px solid #d4d4d4;
}
.group {
  display: flex;
  flex-direction: column;
  margin: 5px 0 4px;
  border-right: 1px solid #d6d6d6;
}
.group.rest {
  justify-content: flex-end;
  border: 0;
}
.group.rest .group-name {
  justify-content: flex-end;
}
.tools {
  display: flex;
  flex: 1;
  padding-left: 9px;
}
.roomy {
  gap: 3px;
}
.big {
  flex-direction: column;
  align-self: flex-start;
  gap: 4px;
  padding: 2px 4px 0;
}
.big.off {
  color: #bdbdbd;
}
.big.gallery {
  padding: 0 4px 0 14px;
}
.cap {
  display: flex;
  align-items: center;
}
.cap:has(.under) {
  flex-direction: column;
}
.lines {
  display: flex;
  flex-direction: column;
  align-items: center;
}
.beside {
  margin: 8px 2px 0 6px;
}
.under {
  margin-top: 5px;
}
.smalls {
  display: flex;
  flex-direction: column;
  margin: -4px 0 0 4px;
}
.small {
  gap: 5px;
  height: 30px;
}
.small svg.sc {
  margin-left: 1px;
}
.loose .small svg.sc {
  margin-left: 6px;
}
.sim-small {
  display: grid;
  grid-template: repeat(3, 30px) / 25px 25px;
  margin: -4px 0 0 7px;
}
.sim-mid {
  display: grid;
  grid-template: repeat(2, 41px) / repeat(3, 33px);
  height: 82px;
}
.sim-text {
  display: grid;
  grid-template: repeat(2, 41px) / 102px auto;
  height: 82px;
}
.sim-text button {
  gap: 4px;
}
.group-name {
  display: flex;
  height: 18px;
  color: #0a6a92;
}
.group-name span {
  flex: 1;
  text-align: center;
  line-height: 19px;
}
.group-name button {
  justify-content: center;
  width: 26px;
  height: 18px;
  color: #222;
}

.selbar {
  display: flex;
  align-items: center;
  height: 34px;
  border-bottom: 1px solid #a6a6a6;
}
.menu {
  gap: 6px;
  padding: 0 10px 0 12px;
}
.bar {
  width: 1px;
  height: 27px;
  background: #d4d4d4;
}
.pick {
  position: relative;
  display: block;
  height: 29px;
}
.pick::after {
  content: '';
  position: absolute;
  right: 7px;
  top: 12px;
  border: solid transparent;
  border-width: 6px 6px 0;
  border-top-color: #222;
  pointer-events: none;
}
.pick select {
  width: 100%;
  height: 29px;
  padding: 0 2px;
  border: 1px solid #707070;
  border-radius: 0;
  appearance: none;
  background: #fff;
  color: inherit;
  font: inherit;
}
.first {
  width: 218px;
  margin: 0 8px 0 12px;
}
.second {
  width: 229px;
  margin: 0 8px 0 10px;
}
.second ~ .bar {
  margin-left: 11px;
}
.more-sel {
  margin: 6px 8px 0 auto;
}

.main {
  display: flex;
  flex: 1;
  min-height: 0;
  border-bottom: 1px solid #a6a6a6;
}
.side {
  display: flex;
  flex-direction: column;
  box-sizing: border-box;
  width: 32px;
  border-right: 1px solid #a0a0a0;
  background: #dcdcdc;
}
.side .cog {
  height: 26px;
  margin-bottom: 16px;
  padding-left: 7px;
}
.res {
  height: 42px;
  padding-left: 6px;
}
.res.on {
  height: 45px;
  margin: -1px -1px -2px 2px;
  padding-left: 4px;
  border: 1px solid #a0a0a0;
  border-right: 0;
  box-sizing: border-box;
  background: #fff;
}
.res.web, .res.clock {
  margin-top: 12px;
}

.nav {
  display: flex;
  flex-direction: column;
  box-sizing: border-box;
  width: 610px;
  padding: 0 9px 6px 6px;
  border-right: 1px solid #a0a0a0;
}
.nav-title {
  display: flex;
  align-items: center;
  justify-content: space-between;
  height: 34px;
  padding: 2px 8px 0 4px;
  box-sizing: border-box;
  font-size: 18px;
}
.grid {
  display: flex;
  flex: 1;
  flex-direction: column;
  min-height: 0;
  padding: 1px;
  border: 1px solid #d4d4d4;
}
.grid-body {
  flex: 1;
  min-height: 0;
  overflow: hidden;
}
table {
  width: 100%;
  table-layout: fixed;
  border-spacing: 0;
  font-size: 18px;
}
.c1 {
  width: 359px;
}
.c2 {
  width: 60px;
}
th, td {
  box-sizing: border-box;
  height: 28px;
  padding: 0 0 0 4px;
  border-bottom: 1px solid #ebebeb;
  border-left: 1px solid #ebebeb;
  line-height: 24px;
  text-align: left;
  white-space: nowrap;
}
th {
  padding-left: 6px;
  border-color: #d0d0d0;
  background: #efefef;
  font-weight: 400;
}
td:first-child {
  padding: 0;
  border-left: 0;
}
th:first-child {
  border-left: 0;
}
tbody tr:nth-child(even) {
  background: #fafafa;
}
.sort {
  display: inline-block;
  margin-left: 14px;
  transform: rotate(180deg);
  vertical-align: -1px;
}
.node {
  position: relative;
  display: flex;
  align-items: center;
  height: 27px;
}
.guide path {
  fill: none;
  stroke: #8a8a8a;
  stroke-dasharray: 1 1;
}
.minus {
  position: absolute;
  left: 3px;
  top: 8px;
  width: 13px;
  height: 13px;
  border: 1px solid #c8c8c8;
  background: linear-gradient(#333, #333) center / 9px 1px no-repeat #fff;
}
.kid, .dir {
  display: flex;
  align-items: center;
  gap: 3px;
}
.kid {
  gap: 2px;
}
.kid input {
  width: 14px;
  height: 14px;
  margin: 0 0 0 1px;
  border: 1px solid #444;
  appearance: none;
  background: #fff;
}
.kid input:checked::before {
  content: '';
  display: block;
  width: 7px;
  height: 3px;
  margin: 2px 0 0 1px;
  border: solid #14d22a;
  border-width: 0 0 2px 2px;
  transform: rotate(-48deg);
}
.kid svg {
  margin-right: 1px;
}
.hscroll {
  height: 25px;
  margin-top: 1px;
  padding: 7px 26px;
  box-sizing: border-box;
  background: #efefef;
}
.thumb {
  width: 132px;
  height: 11px;
  background: #868686;
}
.split {
  height: 5px;
  box-sizing: border-box;
  border: 1px solid #a6a6a6;
  background: #dcdcdc;
}
.fold {
  gap: 12px;
  box-sizing: border-box;
  height: 32px;
  padding: 3px 0 0 13px;
  border-bottom: 2px solid #d0d0d0;
  color: #005f87;
  font-size: 22px;
}
.fold::before {
  content: '';
  border: solid transparent;
  border-width: 7px 0 7px 7px;
  border-left-color: #005f87;
}

.stage {
  display: flex;
  flex: 1;
  flex-direction: column;
  min-width: 0;
}
.files {
  display: flex;
  height: 32px;
  border-bottom: 2px solid #005f87;
}
.file {
  gap: 5px;
  padding: 0 22px 0 6px;
  font-size: 18px;
}
.cur {
  gap: 6px;
  padding: 0 6px;
  background: #005f87;
  color: #fff;
}
.scene {
  flex: 1;
  min-height: 0;
  width: 100%;
}
.axis {
  font: 13px 'Liberation Sans', sans-serif;
}
.strip {
  display: flex;
  flex-direction: column;
  box-sizing: border-box;
  width: 36px;
  padding: 9px 0 0 5px;
  border-left: 1px solid #d8d8d8;
}
.strip button {
  height: 32px;
}
.strip i {
  height: 1px;
  margin: 5px 5px 0 0;
  background: #d4d4d4;
}
.tick {
  align-self: flex-start;
  margin: auto 0 9px 6px;
  border: solid transparent;
  border-width: 4px 4px 4px 0;
  border-right-color: #111;
}
.status {
  height: 27px;
}
.dock {
  height: 9px;
  border-top: 2px solid #484a4b;
  background: linear-gradient(90deg, #28292b, #242424 50%, #1f2426);
}
.dock span {
  display: block;
  width: 58px;
  height: 5px;
  margin: 4px 0 0 769px;
  border-radius: 5px 5px 0 0;
  background: #3a3b3d;
}
.mark {
  position: absolute;
  right: 5px;
  bottom: 13px;
  color: rgba(222, 222, 222, 0.9);
  font: 47px/60px 'Liberation Sans', sans-serif;
  text-shadow: 1px 1px 1px #8a8a8a;
  pointer-events: none;
}
</style>
